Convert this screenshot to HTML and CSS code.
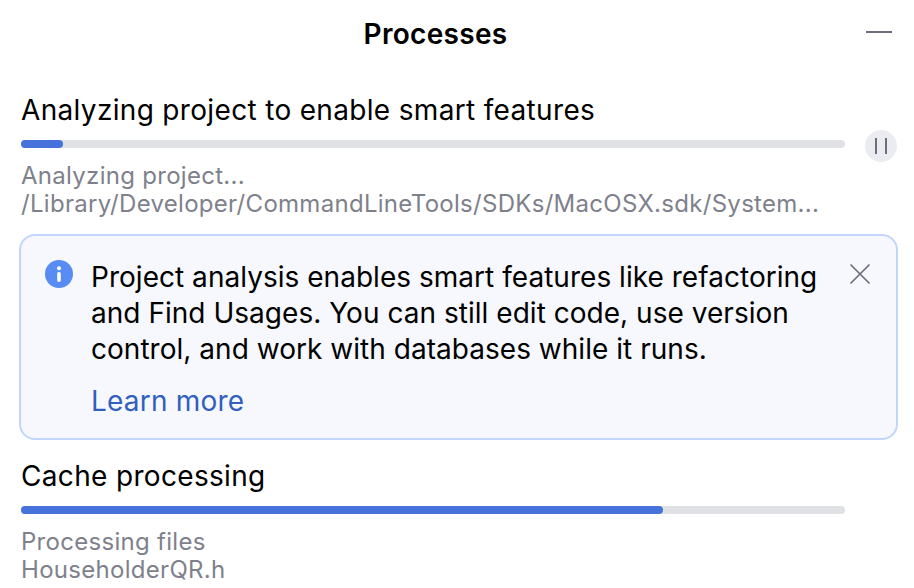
FILE: index.html
```html
<!DOCTYPE html>
<html lang="en">

<head>
    <meta charset="UTF-8">
    <title>Processes</title>
    <link rel="stylesheet" href="styles.css">
</head>

<body>
    <div class="panel">
        <div class="panel-header">
            <h1>Processes</h1>
            <span class="minimize"></span>
        </div>

        <!-- First process -->
        <div class="process">
            <div class="process-title">Analyzing project to enable smart features</div>
            <div class="progress-row">
                <div class="progress-track">
                    <div class="progress-fill fill-small"></div>
                </div>
                <button class="pause-button"><span></span><span></span></button>
            </div>
            <div class="process-status">Analyzing project...</div>
            <div class="process-status">/Library/Developer/CommandLineTools/SDKs/MacOSX.sdk/System...</div>
        </div>

        <!-- Info banner -->
        <div class="banner">
            <svg class="banner-icon" width="28" height="28" viewBox="0 0 28 28">
                <circle cx="14" cy="14" r="14" fill="#588cf3" />
                <circle cx="14" cy="8.2" r="2" fill="#fff" />
                <rect x="12.2" y="12" width="3.6" height="10" rx="1.8" fill="#fff" />
            </svg>
            <div class="banner-body">
                <p>Project analysis enables smart features like refactoring and Find Usages. You can still edit code, use version control, and work with databases while it runs.</p>
                <a class="banner-link" href="#">Learn more</a>
            </div>
            <svg class="banner-close" width="22" height="22" viewBox="0 0 22 22">
                <path d="M1.5 1.5 L20.5 20.5 M20.5 1.5 L1.5 20.5" stroke="#6c707e" stroke-width="1.7" fill="none" />
            </svg>
        </div>

        <!-- Second process -->
        <div class="process">
            <div class="process-title">Cache processing</div>
            <div class="progress-row">
                <div class="progress-track">
                    <div class="progress-fill fill-large"></div>
                </div>
            </div>
            <div class="process-status">Processing files</div>
            <div class="process-status">HouseholderQR.h</div>
        </div>
    </div>
</body>

</html>
```

FILE: styles.css
```css
body {
    font-family: 'Inter', sans-serif;
    background-color: #fff;
    color: #000;
    margin: 0;
    padding: 0;
}

.panel {
    width: 914px;
    height: 580px;
    overflow: hidden;
    box-sizing: border-box;
    padding: 0 17px 0 21px;
}

.panel-header {
    display: flex;
    justify-content: center;
    align-items: center;
    height: 68px;
    padding-right: 47px;
    position: relative;
}

h1 {
    margin: 0;
    font-size: 28px;
    font-weight: 600;
    letter-spacing: 0.3px;
}

.minimize {
    position: absolute;
    right: 5px;
    top: 31px;
    width: 26px;
    height: 2px;
    background-color: #6c707e;
}

.process-title {
    font-size: 28px;
    line-height: 36px;
    letter-spacing: 0.33px;
    margin-top: 24px;
}

.banner + .process .process-title {
    margin-top: 18px;
}

.progress-row {
    display: flex;
    align-items: center;
    height: 8px;
    margin: 12px 0 14px;
}

.progress-track {
    width: 824px;
    height: 8px;
    border-radius: 4px;
    background-color: #dfe1e5;
}

.progress-fill {
    height: 100%;
    border-radius: 4px;
    background-color: #4672dc;
}

.fill-small {
    width: 42px;
}

.fill-large {
    width: 642px;
}

.pause-button {
    display: flex;
    justify-content: center;
    align-items: center;
    gap: 8px;
    flex: none;
    width: 32px;
    height: 32px;
    margin: 4px 0 0 20px;
    padding: 0;
    border: none;
    border-radius: 50%;
    background-color: #ebecf0;
}

.pause-button span {
    width: 2px;
    height: 16px;
    background-color: #6c707e;
}

.process-status {
    font-size: 24px;
    line-height: 28px;
    letter-spacing: 0.29px;
    color: #7e818c;
    white-space: nowrap;
}

.banner {
    display: flex;
    margin: 16px -1px 0 -2px;
    padding: 24px 25px 20px 24px;
    border: 2px solid #c2d6fc;
    border-radius: 16px;
    background-color: #f6f8fd;
    height: 206px;
    box-sizing: border-box;
}

.banner-icon {
    flex: none;
    margin: 0 18px 0 0;
}

.banner-body {
    flex: 1;
    font-size: 28px;
    line-height: 36px;
    letter-spacing: 0.03px;
}

.banner-body p {
    margin: 0;
    margin-top: -1px;
}

.banner-link {
    display: block;
    margin-top: 16px;
    color: #315fbd;
    letter-spacing: 0.2px;
    text-decoration: none;
}

.banner-close {
    flex: none;
    margin: 3px 0 0 6px;
}
```
